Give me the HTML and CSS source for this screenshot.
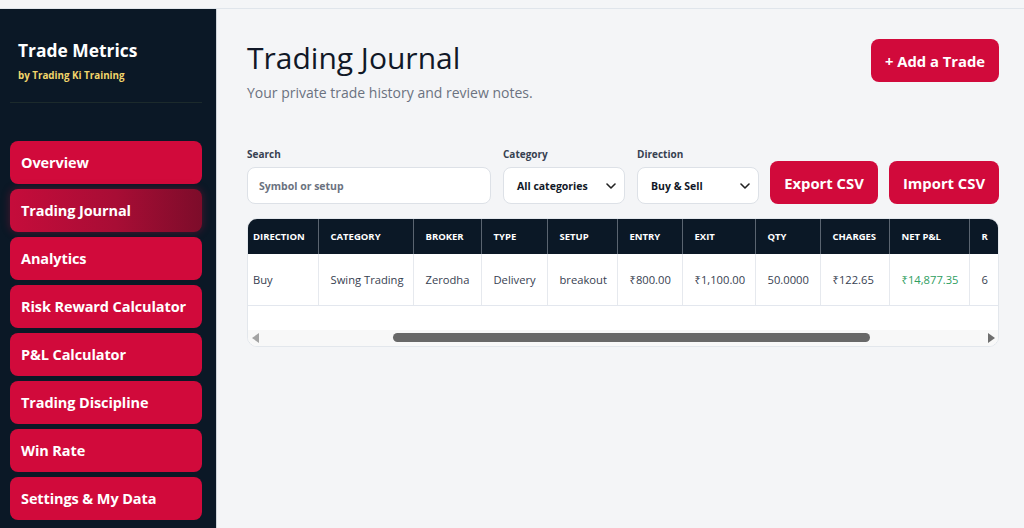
FILE: index.html
```html
<!DOCTYPE html>
<html lang="en">
<head>
<meta charset="utf-8">
<title>Trade Metrics - Trading Journal</title>
<link rel="stylesheet" href="styles.css">
</head>
<body>
<div class="app">
  <aside class="sidebar">
    <div class="brand">
      <div class="brand-title">Trade Metrics</div>
      <div class="brand-sub">by Trading Ki Training</div>
    </div>
    <nav class="nav">
      <a class="nav-item">Overview</a>
      <a class="nav-item active">Trading Journal</a>
      <a class="nav-item">Analytics</a>
      <a class="nav-item">Risk Reward Calculator</a>
      <a class="nav-item">P&amp;L Calculator</a>
      <a class="nav-item">Trading Discipline</a>
      <a class="nav-item">Win Rate</a>
      <a class="nav-item">Settings &amp; My Data</a>
    </nav>
  </aside>
  <main class="main">
    <header class="page-head">
      <div>
        <h1 class="page-title">Trading Journal</h1>
        <p class="page-sub">Your private trade history and review notes.</p>
      </div>
      <button class="btn btn-add">+ Add a Trade</button>
    </header>

    <section class="filters">
      <div class="field field-search">
        <label class="field-label">Search</label>
        <div class="input"><span class="placeholder">Symbol or setup</span></div>
      </div>
      <div class="field field-select">
        <label class="field-label">Category</label>
        <div class="select"><span>All categories</span>
          <svg class="chev" width="10" height="6" viewBox="0 0 10 6"><path d="M1 1l4 4 4-4" fill="none" stroke="#222" stroke-width="1.6" stroke-linecap="round" stroke-linejoin="round"/></svg>
        </div>
      </div>
      <div class="field field-select">
        <label class="field-label">Direction</label>
        <div class="select"><span>Buy &amp; Sell</span>
          <svg class="chev" width="10" height="6" viewBox="0 0 10 6"><path d="M1 1l4 4 4-4" fill="none" stroke="#222" stroke-width="1.6" stroke-linecap="round" stroke-linejoin="round"/></svg>
        </div>
      </div>
      <button class="btn btn-export">Export CSV</button>
      <button class="btn btn-import">Import CSV</button>
    </section>

    <section class="table-card">
      <div class="table-view">
        <table class="trades">
          <colgroup>
            <col style="width:70px"><col style="width:95px"><col style="width:68px"><col style="width:66px"><col style="width:70px"><col style="width:65px"><col style="width:73px"><col style="width:65px"><col style="width:69px"><col style="width:80px"><col style="width:40px">
          </colgroup>
          <thead>
            <tr>
              <th class="first">DIRECTION</th><th>CATEGORY</th><th>BROKER</th><th>TYPE</th><th>SETUP</th><th>ENTRY</th><th>EXIT</th><th>QTY</th><th>CHARGES</th><th>NET P&amp;L</th><th>R</th>
            </tr>
          </thead>
          <tbody>
            <tr>
              <td class="first">Buy</td><td>Swing Trading</td><td>Zerodha</td><td>Delivery</td><td>breakout</td><td>₹800.00</td><td>₹1,100.00</td><td>50.0000</td><td>₹122.65</td><td class="pos">₹14,877.35</td><td>6</td>
            </tr>
          </tbody>
        </table>
        <div class="table-space"></div>
      </div>
      <div class="hscroll">
        <svg class="arrow" width="8" height="10" viewBox="0 0 8 10"><path d="M7 0v10L0 5z" fill="#a3a3a3"/></svg>
        <div class="track"><div class="thumb"></div></div>
        <svg class="arrow" width="8" height="10" viewBox="0 0 8 10"><path d="M1 0v10l7-5z" fill="#6e6e6e"/></svg>
      </div>
    </section>
  </main>
</div>
</body>
</html>
```
FILE: styles.css
```css
* { box-sizing: border-box; }
html, body { height: 100%; }
body {
  margin: 0;
  padding-top: 8px;
  background: #f4f5f7;
  font-family: "Open Sans", "Noto Sans", sans-serif;
  color: #1f2937;
  overflow: hidden;
}
.app {
  display: flex;
  height: 520px;
  border-top: 1px solid #e0e5eb;
}
.sidebar {
  width: 217px;
  flex: none;
  background: #0b1826;
  border-right: 1px solid #cfd4da;
  padding: 0 14px 0 10px;
}
.brand {
  padding: 30px 8px 19px;
  border-bottom: 1px solid #1c2a2c;
}
.brand-title {
  color: #ffffff;
  font-weight: 700;
  font-size: 17.4px;
  line-height: 22px;
}
.brand-sub {
  margin-top: 8px;
  color: #f2d56b;
  font-weight: 700;
  font-size: 9.8px;
  line-height: 14px;
}
.nav {
  margin-top: 38px;
  display: flex;
  flex-direction: column;
  gap: 5px;
}
.nav-item {
  display: flex;
  align-items: center;
  height: 43px;
  padding-left: 11px;
  border-radius: 8px;
  background: #d10a3b;
  color: #ffffff;
  font-weight: 700;
  font-size: 14.5px;
  letter-spacing: -0.1px;
}
.nav-item.active {
  background: linear-gradient(90deg, #c50c3b 0%, #a80d35 55%, #7d0c2a 100%);
  box-shadow: 0 0 8px rgba(200, 16, 60, 0.35);
}
.main {
  flex: 1;
  padding: 30px 25px 0 30px;
  min-width: 0;
}
.page-head {
  display: flex;
  justify-content: space-between;
  align-items: flex-start;
}
.page-title {
  margin: 1px 0 0;
  font-weight: 400;
  font-size: 30px;
  line-height: 36px;
  color: #111827;
}
.page-sub {
  margin: 7px 0 0;
  font-size: 14px;
  line-height: 20px;
  color: #6b7280;
}
.btn {
  border: none;
  border-radius: 8px;
  background: #d10a3b;
  color: #ffffff;
  font-family: inherit;
  font-weight: 700;
  font-size: 14.8px;
  height: 43px;
  padding: 0;
}
.btn-add {
  margin-top: 0;
  width: 128px;
}
.filters {
  margin-top: 44px;
  display: flex;
  align-items: flex-end;
  gap: 12px;
}
.field { display: flex; flex-direction: column; }
.field-search { width: 244px; }
.field-select { width: 122px; }
.field-label {
  font-size: 10px;
  font-weight: 700;
  line-height: 14px;
  color: #374151;
  margin-bottom: 6px;
}
.input, .select {
  height: 37px;
  background: #ffffff;
  border: 1px solid #dde1e7;
  border-radius: 8px;
  display: flex;
  align-items: center;
  font-size: 10.5px;
  font-weight: 700;
}
.input { padding-left: 11px; }
.placeholder { color: #6b7280; }
.select {
  padding: 0 8px 0 13px;
  justify-content: space-between;
  color: #111827;
}
.btn-export { width: 108px; margin-left: -1px; }
.btn-import { width: 110px; margin-left: -1px; }
.table-card {
  margin-top: 14px;
  background: #ffffff;
  border: 1px solid #e3e7ec;
  border-radius: 10px;
  overflow: hidden;
}
.table-view { overflow: hidden; }
.trades {
  border-collapse: collapse;
  table-layout: fixed;
  width: 761px;
}
.trades th {
  background: #0b1826;
  color: #ffffff;
  font-size: 9.5px;
  font-weight: 700;
  text-align: left;
  height: 35px;
  padding: 0 0 0 12px;
  border-left: 1px solid #5a6470;
  white-space: nowrap;
}
.trades td {
  height: 51px;
  font-size: 11.2px;
  color: #374151;
  padding: 0 0 0 12px;
  border-left: 1px solid #e6e9ee;
  border-bottom: 1px solid #e3e7ee;
  white-space: nowrap;
}
.trades th.first, .trades td.first { border-left: none; padding-left: 5px; }
.trades td.pos { color: #2f9e5f; }
.table-space { height: 24px; }
.hscroll {
  height: 16px;
  background: #f8f8f8;
  display: flex;
  align-items: center;
  padding: 0 3px 0 4px;
}
.arrow { flex: none; }
.track {
  flex: 1;
  height: 16px;
  display: flex;
  align-items: center;
  padding: 0 117px 0 133px;
}
.thumb {
  flex: 1;
  height: 9px;
  border-radius: 5px;
  background: #686868;
}
```
